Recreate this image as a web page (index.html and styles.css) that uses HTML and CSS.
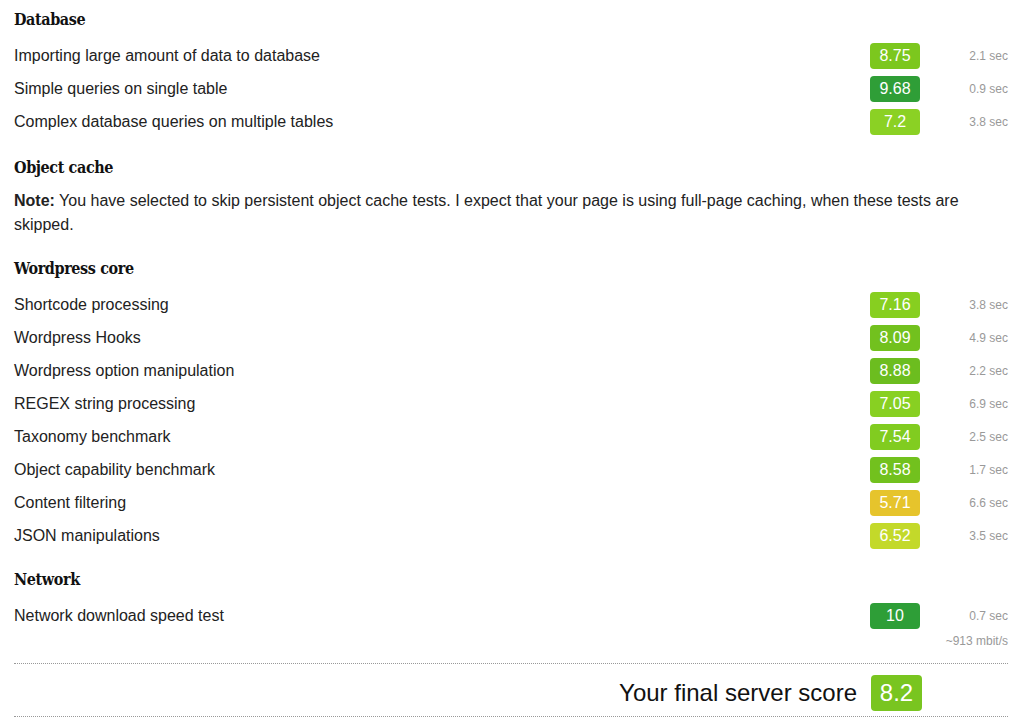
FILE: index.html
```html
<!DOCTYPE html>
<html>
<head>
<meta charset="utf-8">
<link rel="stylesheet" href="styles.css">
</head>
<body>
<div class="page">
  <section class="section first">
    <h2 class="heading">Database</h2>
    <div class="row"><span class="name">Importing large amount of data to database</span><span class="badge" style="background:#7cc71e">8.75</span><span class="sec">2.1 sec</span></div>
    <div class="row"><span class="name">Simple queries on single table</span><span class="badge" style="background:#2f9e37">9.68</span><span class="sec">0.9 sec</span></div>
    <div class="row"><span class="name">Complex database queries on multiple tables</span><span class="badge" style="background:#8bd124">7.2</span><span class="sec">3.8 sec</span></div>
  </section>
  <section class="section">
    <h2 class="heading">Object cache</h2>
    <p class="note"><b>Note:</b> You have selected to skip persistent object cache tests. I expect that your page is using full-page caching, when these tests are skipped.</p>
  </section>
  <section class="section">
    <h2 class="heading">Wordpress core</h2>
    <div class="row"><span class="name">Shortcode processing</span><span class="badge" style="background:#87cf20">7.16</span><span class="sec">3.8 sec</span></div>
    <div class="row"><span class="name">Wordpress Hooks</span><span class="badge" style="background:#72c11e">8.09</span><span class="sec">4.9 sec</span></div>
    <div class="row"><span class="name">Wordpress option manipulation</span><span class="badge" style="background:#6cbd1f">8.88</span><span class="sec">2.2 sec</span></div>
    <div class="row"><span class="name">REGEX string processing</span><span class="badge" style="background:#88d022">7.05</span><span class="sec">6.9 sec</span></div>
    <div class="row"><span class="name">Taxonomy benchmark</span><span class="badge" style="background:#81cc20">7.54</span><span class="sec">2.5 sec</span></div>
    <div class="row"><span class="name">Object capability benchmark</span><span class="badge" style="background:#72c11e">8.58</span><span class="sec">1.7 sec</span></div>
    <div class="row"><span class="name">Content filtering</span><span class="badge" style="background:#e6c42c">5.71</span><span class="sec">6.6 sec</span></div>
    <div class="row"><span class="name">JSON manipulations</span><span class="badge" style="background:#c3d92a">6.52</span><span class="sec">3.5 sec</span></div>
  </section>
  <section class="section network">
    <h2 class="heading">Network</h2>
    <div class="row"><span class="name">Network download speed test</span><span class="badge" style="background:#2e9e37">10</span><span class="sec">0.7 sec</span></div>
    <div class="extra">~913 mbit/s</div>
  </section>
  <div class="final">
    <span class="final-label">Your final server score</span>
    <span class="badge big" style="background:#79c520">8.2</span>
    <span class="sec"></span>
  </div>
</div>
</body>
</html>
```
FILE: styles.css
```css
html, body {
  margin: 0;
  padding: 0;
  background: #fff;
}
body {
  font-family: "Liberation Sans", Arial, sans-serif;
  color: #222;
  font-size: 16px;
}
.page {
  padding: 8px 16px 0 14px;
}
.section {
  margin-top: 18px;
}
.section.first {
  margin-top: 0;
}
.section.network {
  margin-top: 16px;
}
.heading {
  font-family: "DejaVu Serif Condensed", "DejaVu Serif", serif;
  font-stretch: condensed;
  font-weight: bold;
  font-size: 16px;
  line-height: 24px;
  margin: 0 0 7px 0;
  color: #111;
  letter-spacing: -0.4px;
}
.row {
  display: grid;
  grid-template-columns: 1fr 50px 88px;
  align-items: center;
  height: 33px;
}
.name {
  line-height: 20px;
}
.badge {
  display: flex;
  align-items: center;
  justify-content: center;
  height: 26px;
  border-radius: 4px;
  color: #fff;
  font-size: 16px;
}
.sec {
  text-align: right;
  font-size: 12px;
  color: #999;
}
.note {
  margin: 0;
  padding: 2px 0 2px 0;
  line-height: 24px;
}
.note b {
  font-weight: bold;
}
.extra {
  text-align: right;
  font-size: 12px;
  color: #999;
  line-height: 14px;
  margin-top: 2px;
}
.final {
  margin-top: 15px;
  border-top: 1px dotted #999;
  border-bottom: 1px dotted #999;
  display: grid;
  grid-template-columns: 1fr 51px 86px;
  align-items: center;
  padding: 11px 0 5px;
}
.final-label {
  text-align: right;
  font-size: 24px;
  color: #111;
  padding-right: 14px;
}
.badge.big {
  height: 36px;
  font-size: 24px;
}
```
